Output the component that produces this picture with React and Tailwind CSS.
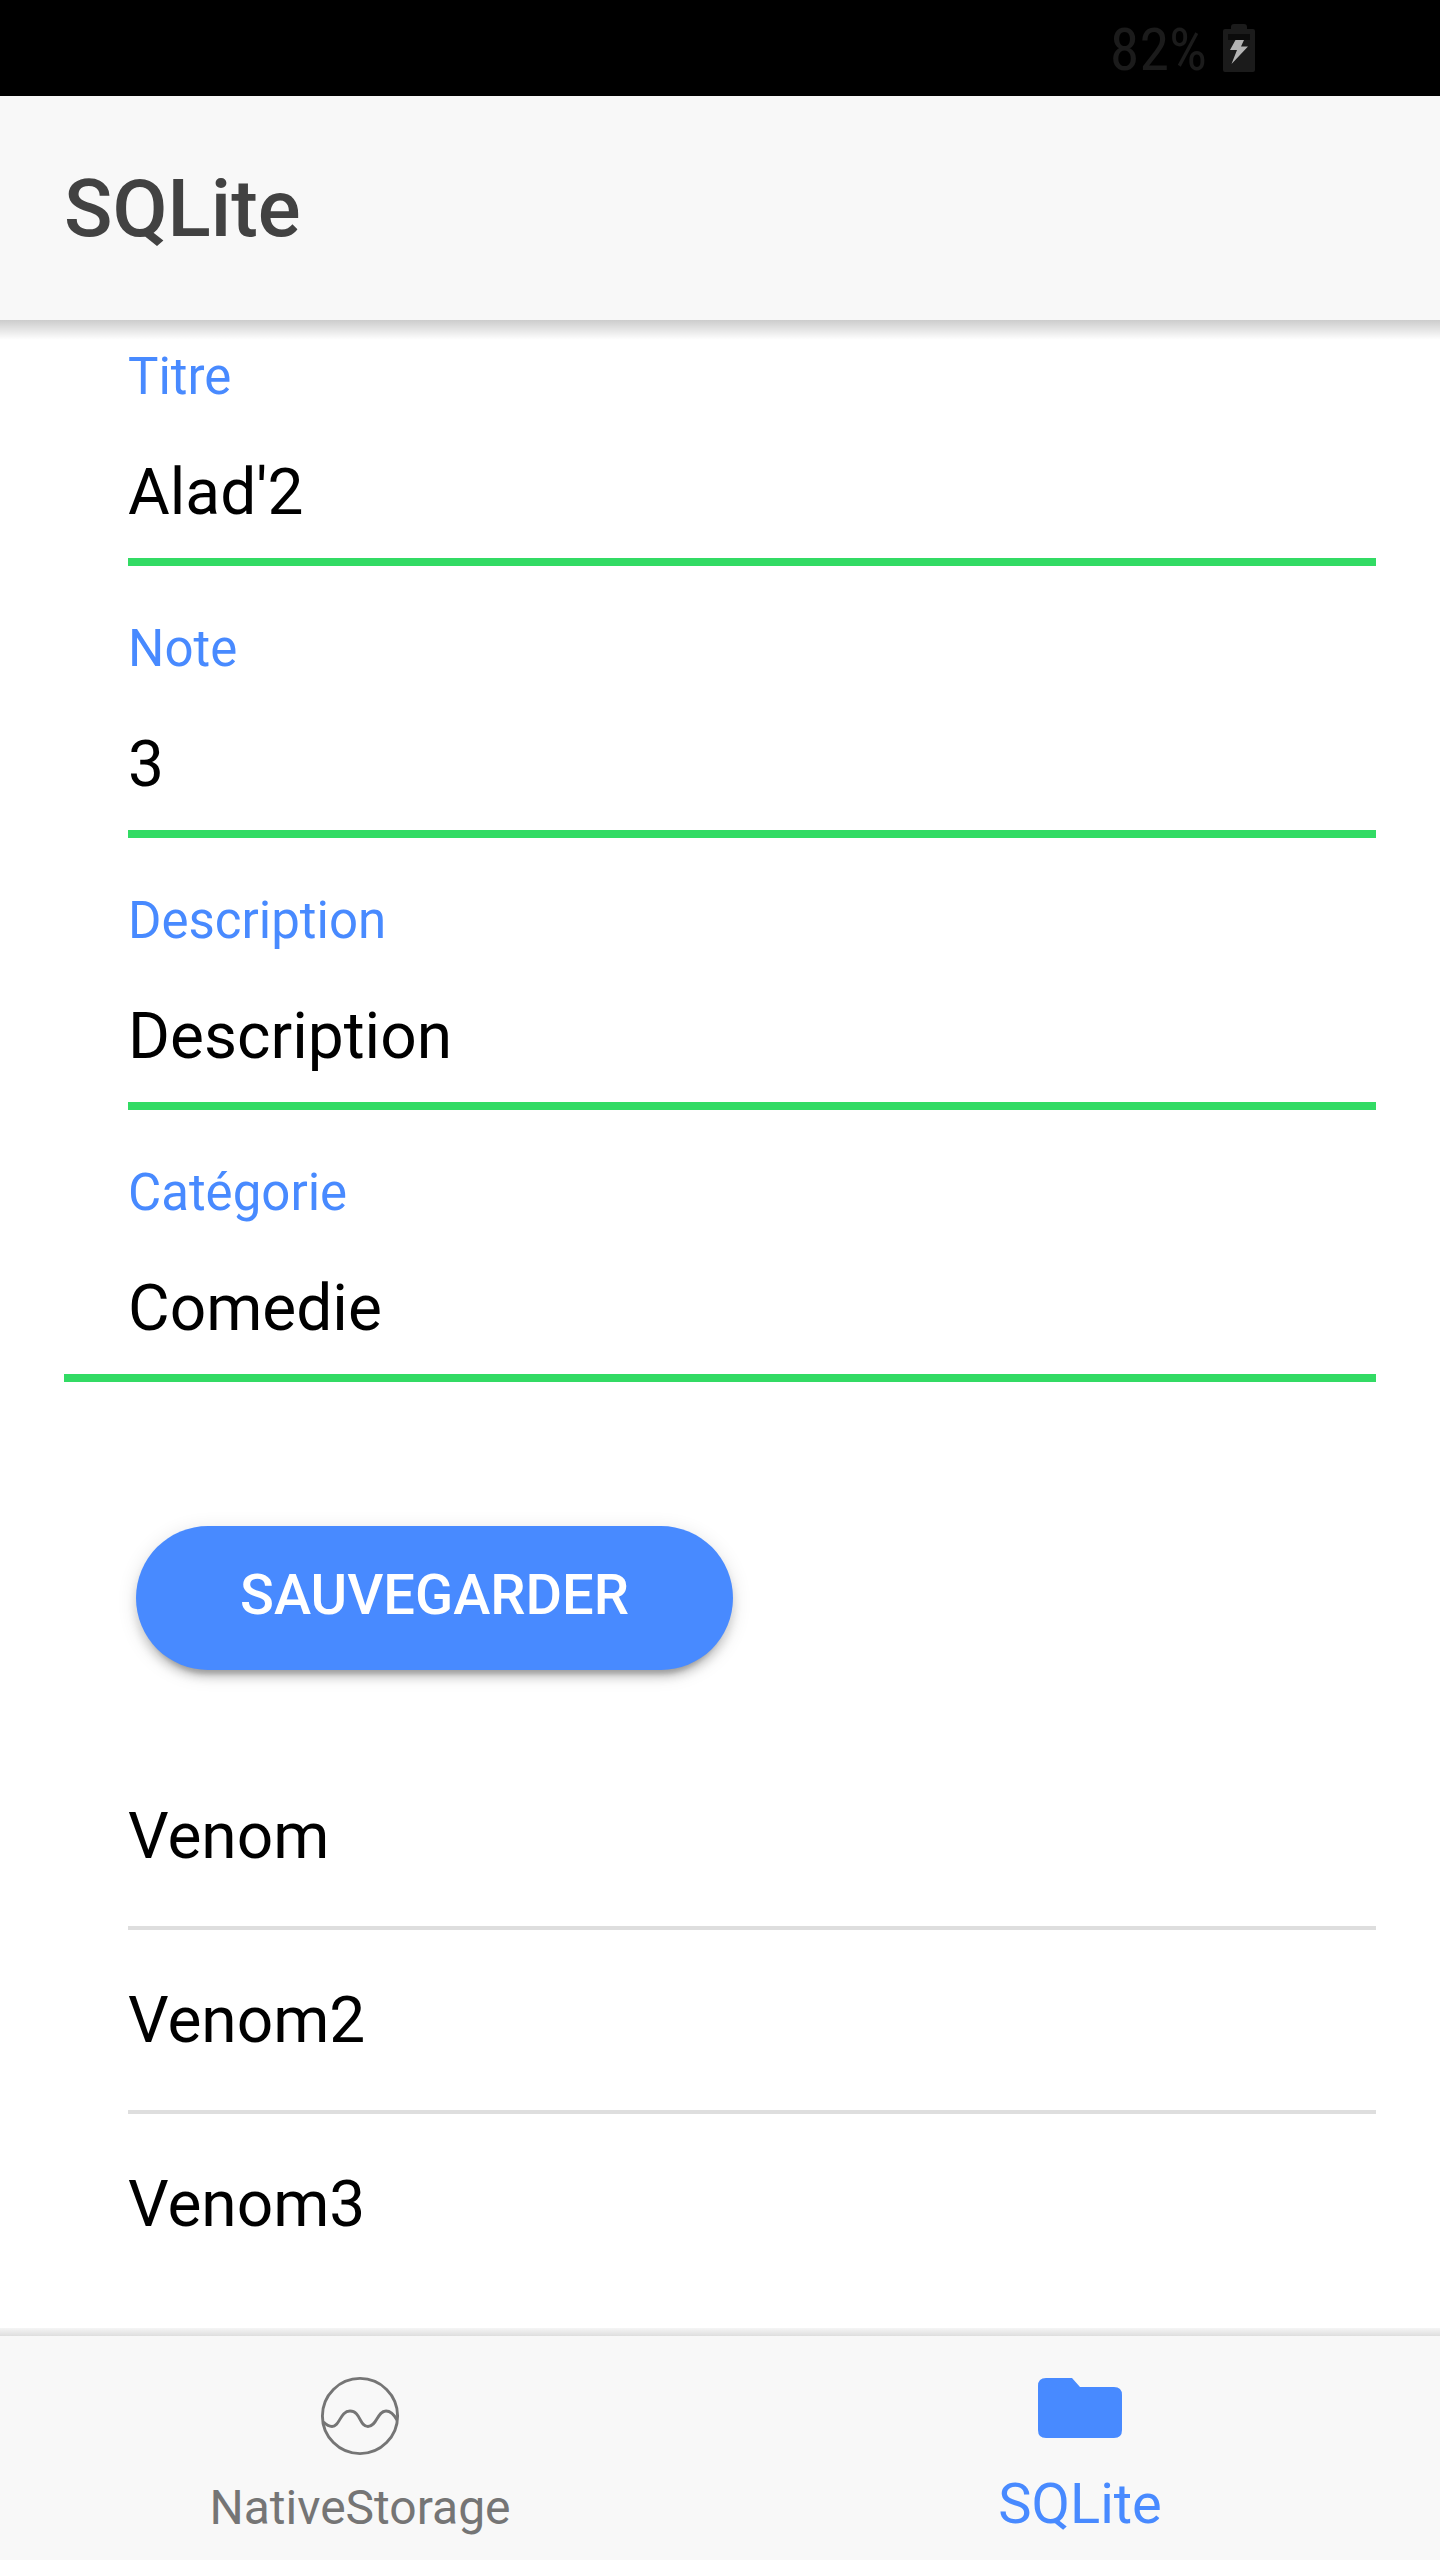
import { useState } from "react";

const FIELDS = [
  { id: "titre", label: "Titre", value: "Alad'2" },
  { id: "note", label: "Note", value: "3" },
  { id: "description", label: "Description", value: "Description" },
  { id: "categorie", label: "Catégorie", value: "Comedie" },
];

const MOVIES = ["Venom", "Venom2", "Venom3"];

function BatteryIcon() {
  return (
    <svg viewBox="0 0 32 48" className="h-12 w-8" aria-hidden="true">
      <path
        d="M2 5h6V3q0-3 3-3h10q3 0 3 3v2h6q2 0 2 2v39q0 2-2 2H2q-2 0-2-2V7q0-2 2-2Z"
        fill="#1b1b1b"
      />
      <path d="M5 10h22v6H5z" fill="#0b0b0b" />
      <path d="M12.500 16h8.500l-3 6.500h7L8.500 40l5.500-14H7Z" fill="#b4b4b4" />
    </svg>
  );
}

function WaveIcon() {
  return (
    <svg
      viewBox="0 0 80 80"
      className="size-20"
      fill="none"
      stroke="currentColor"
      strokeWidth="2.900"
      aria-hidden="true"
    >
      <circle cx="40" cy="40" r="37.600" />
      <path d="M3.500 46C7 49.500 10 50.500 12 50.500C20 50.500 20 35 30 35C41 35 39 50.500 48 50.500C57 50.500 57 35 66 35C71 35 74 38.500 77 44" />
    </svg>
  );
}

function FolderIcon() {
  return (
    <svg viewBox="0 0 84 60" className="h-15 w-21" fill="currentColor" aria-hidden="true">
      <path d="M8 0H34L42 9H76Q84 9 84 17V52Q84 60 76 60H8Q0 60 0 52V8Q0 0 8 0Z" />
    </svg>
  );
}

function Field({ field, last }) {
  const [value, setValue] = useState(field.value);
  return (
    <div
      className={
        last
          ? "ml-16 border-b-8 border-[#32db64] pb-[26px] pl-16"
          : "ml-32 border-b-8 border-[#32db64] pb-[26px]"
      }
    >
      <label htmlFor={field.id} className="block text-[51px] leading-[62px] text-[#488aff]">
        {field.label}
      </label>
      <input
        id={field.id}
        type="text"
        value={value}
        onChange={(e) => setValue(e.target.value)}
        className="mt-[46px] block h-[78px] w-full bg-transparent text-[64px] leading-[78px] text-black outline-none"
      />
    </div>
  );
}

export default function App() {
  return (
    <div className="flex min-h-screen flex-col bg-white font-['Roboto',sans-serif]">
      <div className="flex h-24 items-center justify-end gap-4 bg-black pr-[185px] text-[#1b1b1b]">
        <span className="pt-1 font-['Roboto_Condensed','Roboto',sans-serif] text-[60px] leading-[72px]">
          82%
        </span>
        <BatteryIcon />
      </div>

      <header className="relative flex h-56 items-center bg-[#f8f8f8] px-16 pt-0.5">
        <h1 className="text-[80px] leading-[96px] font-medium text-[#424242]">SQLite</h1>
        <div className="absolute inset-x-0 top-full h-5 bg-linear-to-b from-black/20 via-black/10 to-transparent" />
      </header>

      <main className="flex-1 pt-[26px]">
        <form onSubmit={(e) => e.preventDefault()}>
          <div className="flex flex-col gap-[52px] pr-16">
            {FIELDS.map((field, i) => (
              <Field key={field.id} field={field} last={i === FIELDS.length - 1} />
            ))}
          </div>
          <button
            type="submit"
            className="mt-36 ml-[136px] block h-36 rounded-full bg-[#488aff] px-[104px] pb-1.5 text-[56px] leading-[64px] font-medium text-white uppercase shadow-[0_12px_4px_-8px_rgba(0,0,0,0.2),0_8px_8px_0_rgba(0,0,0,0.14),0_4px_20px_0_rgba(0,0,0,0.12)]"
          >
            Sauvegarder
          </button>
        </form>

        <ul className="mt-[76px] mr-16 ml-32 divide-y-4 divide-[#dedede]">
          {MOVIES.map((movie) => (
            <li key={movie} className="pt-[53px] pb-[51px] text-[64px] leading-[76px] text-black">
              {movie}
            </li>
          ))}
        </ul>
      </main>

      <nav className="sticky bottom-0 grid h-56 grid-cols-2 bg-[#f8f8f8]">
        <div className="absolute inset-x-0 bottom-full h-2 bg-linear-to-b from-[#f5f5f5] to-[#dedede]" />
        <a href="#native-storage" className="flex flex-col items-center pt-10 text-[#757575]">
          <WaveIcon />
          <span className="mt-6 text-[48px] leading-[56px]">NativeStorage</span>
        </a>
        <a
          href="#sqlite"
          aria-current="page"
          className="flex flex-col items-center pt-[42px] text-[#488aff]"
        >
          <FolderIcon />
          <span className="mt-[34px] text-[56px] leading-[64px]">SQLite</span>
        </a>
      </nav>
    </div>
  );
}
